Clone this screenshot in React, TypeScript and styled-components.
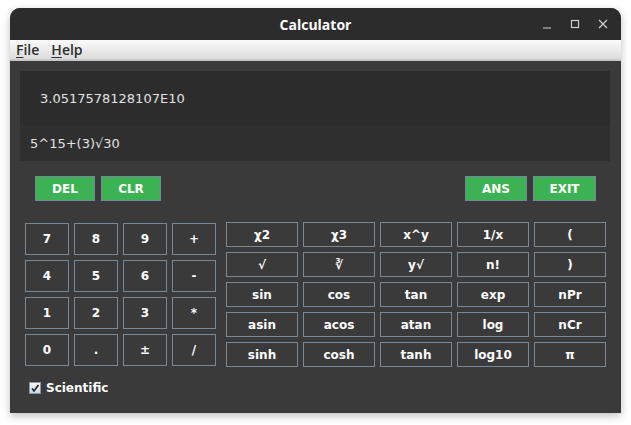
import React from "react";
import styled, { createGlobalStyle } from "styled-components";

const Global = createGlobalStyle`
  html, body { margin: 0; padding: 0; background: #ffffff; }
  body { font-family: "DejaVu Sans", sans-serif; }
`;

const Page = styled.div`
  width: 631px;
  height: 425px;
  padding: 8px 10px 0 10px;
  box-sizing: border-box;
`;

const Window = styled.div`
  width: 611px;
  height: 405px;
  display: flex;
  flex-direction: column;
  border-radius: 10px 10px 0 0;
  overflow: hidden;
  background: #3a3a3a;
  box-shadow: 0 3px 8px rgba(0, 0, 0, 0.25);
`;

const TitleBar = styled.div`
  height: 32px;
  flex: none;
  background: #2c2c2c;
  display: flex;
  align-items: center;
  justify-content: center;
  position: relative;
  color: #ffffff;
  font-family: "Open Sans", "DejaVu Sans", sans-serif;
  font-weight: 700;
  font-size: 14px;
`;

const WinControls = styled.div`
  position: absolute;
  right: 10px;
  top: 0;
  height: 32px;
  display: flex;
  align-items: center;
  gap: 12px;
`;

const CtrlIcon = styled.svg`
  width: 16px;
  height: 16px;
  display: block;
`;

const MenuBar = styled.div`
  height: 19px;
  flex: none;
  background: linear-gradient(#fbfbfb, #dcdcdc);
  border-bottom: 2px solid #c8c8c8;
  display: flex;
  align-items: center;
  gap: 12px;
  padding-left: 6px;
  font-family: "Open Sans", "Noto Sans", sans-serif;
  font-weight: 600;
  font-size: 14px;
  color: #2e2e2e;
`;

const MenuItem = styled.span`
  line-height: 19px;
  u { text-decoration-thickness: 1px; text-underline-offset: 2px; }
`;

const Content = styled.div`
  flex: 1;
  display: flex;
  flex-direction: column;
  padding: 10px 11px 0 10px;
`;

const Display = styled.div`
  height: 90px;
  display: flex;
  flex-direction: column;
  color: #e2e2e2;
  font-family: "DejaVu Sans", sans-serif;
  font-size: 13px;
`;

const ResultLine = styled.div`
  height: 54px;
  background: #2c2c2c;
  display: flex;
  align-items: center;
  padding-left: 20px;
  padding-top: 1px;
  box-sizing: border-box;
`;

const ExprLine = styled.div`
  flex: 1;
  background: #2f2f2f;
  display: flex;
  align-items: center;
  padding-left: 10px;
  padding-top: 1px;
`;

const ControlRow = styled.div`
  margin-top: 15px;
  height: 25px;
  display: flex;
  padding: 0 14px 0 15px;
  gap: 6px;
`;

const Spacer = styled.div`
  flex: 1;
`;

const GreenButton = styled.div<{ $w: number }>`
  width: ${(p) => p.$w}px;
  height: 25px;
  box-sizing: border-box;
  background: #3db254;
  border: 1px solid #778899;
  color: #ffffff;
  font-family: "DejaVu Sans", sans-serif;
  font-weight: 700;
  font-size: 12px;
  display: flex;
  align-items: center;
  justify-content: center;
`;

const Pads = styled.div`
  margin-top: 21px;
  display: flex;
  align-items: flex-start;
  padding-left: 5px;
  gap: 10px;
`;

const NumGrid = styled.div`
  margin-top: 1px;
  display: grid;
  grid-template-columns: repeat(4, 44px);
  grid-auto-rows: 32px;
  gap: 5px;
`;

const SciGrid = styled.div`
  display: grid;
  grid-template-columns: repeat(5, 72px);
  grid-auto-rows: 25px;
  gap: 5px;
`;

const KeyButton = styled.div`
  box-sizing: border-box;
  border: 1px solid #778899;
  background: #3a3a3a;
  color: #ffffff;
  font-family: "DejaVu Sans", sans-serif;
  font-weight: 700;
  font-size: 12px;
  display: flex;
  align-items: center;
  justify-content: center;
`;

const CheckRow = styled.div`
  margin-top: 14px;
  display: flex;
  align-items: center;
  gap: 5px;
  padding-left: 9px;
  color: #ffffff;
  font-family: "DejaVu Sans", sans-serif;
  font-weight: 700;
  font-size: 12px;
`;

const CheckBox = styled.div`
  width: 12px;
  height: 12px;
  box-sizing: border-box;
  border: 1px solid #8a97a5;
  background: linear-gradient(#f4f7fb, #cfd9e4);
  display: flex;
  align-items: center;
  justify-content: center;
`;

const nums = ["7", "8", "9", "+", "4", "5", "6", "-", "1", "2", "3", "*", "0", ".", "±", "/"];
const sci = [
  "χ2", "χ3", "x^y", "1/x", "(",
  "√", "∛", "y√", "n!", ")",
  "sin", "cos", "tan", "exp", "nPr",
  "asin", "acos", "atan", "log", "nCr",
  "sinh", "cosh", "tanh", "log10", "π",
];

export default function App() {
  return (
    <>
      <Global />
      <Page>
        <Window>
          <TitleBar>
            Calculator
            <WinControls>
              <CtrlIcon viewBox="0 0 16 16">
                <line x1="4" y1="12" x2="12" y2="12" stroke="#cfcfcf" strokeWidth="1.2" />
              </CtrlIcon>
              <CtrlIcon viewBox="0 0 16 16">
                <rect x="4.5" y="4.5" width="7" height="7" fill="none" stroke="#cfcfcf" strokeWidth="1.2" />
              </CtrlIcon>
              <CtrlIcon viewBox="0 0 16 16">
                <path d="M4 4 L12 12 M12 4 L4 12" stroke="#cfcfcf" strokeWidth="1.2" />
              </CtrlIcon>
            </WinControls>
          </TitleBar>
          <MenuBar>
            <MenuItem><u>F</u>ile</MenuItem>
            <MenuItem><u>H</u>elp</MenuItem>
          </MenuBar>
          <Content>
            <Display>
              <ResultLine>3.0517578128107E10</ResultLine>
              <ExprLine>5^15+(3)√30</ExprLine>
            </Display>
            <ControlRow>
              <GreenButton $w={60}>DEL</GreenButton>
              <GreenButton $w={60}>CLR</GreenButton>
              <Spacer />
              <GreenButton $w={62}>ANS</GreenButton>
              <GreenButton $w={63}>EXIT</GreenButton>
            </ControlRow>
            <Pads>
              <NumGrid>
                {nums.map((n) => (
                  <KeyButton key={n}>{n}</KeyButton>
                ))}
              </NumGrid>
              <SciGrid>
                {sci.map((s) => (
                  <KeyButton key={s}>{s}</KeyButton>
                ))}
              </SciGrid>
            </Pads>
            <CheckRow>
              <CheckBox>
                <svg width="10" height="10" viewBox="0 0 10 10">
                  <path d="M2 5.5 L4 8 L8.5 2" fill="none" stroke="#1f1f1f" strokeWidth="1.6" />
                </svg>
              </CheckBox>
              Scientific
            </CheckRow>
          </Content>
        </Window>
      </Page>
    </>
  );
}
